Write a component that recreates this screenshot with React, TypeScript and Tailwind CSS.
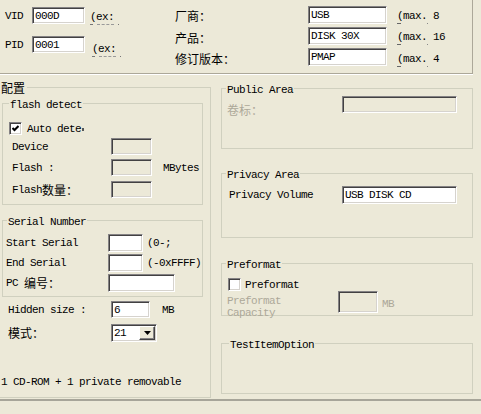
import React from "react";

const mono =
  "font-['Liberation_Mono',monospace] text-[11px] tracking-[-0.6px] leading-[12px] whitespace-nowrap";
const cjk =
  "font-['Noto_Sans_CJK_SC',sans-serif] text-[12px] leading-[12px] whitespace-nowrap";
const sunken =
  "border border-t-[#848284] border-l-[#848284] border-b-white border-r-white shadow-[inset_1px_1px_0_#424142,inset_-1px_-1px_0_#d6d3ce]";
const gray = "text-[#aca899]";

function Edit({
  className = "",
  value = "",
  disabled = false,
}: {
  className?: string;
  value?: string;
  disabled?: boolean;
}) {
  return (
    <div
      className={`${sunken} ${disabled ? "bg-[#ece9d8]" : "bg-white"} ${className} shrink-0 flex items-center pl-[2px] overflow-hidden`}
    >
      <span className={mono}>{value}</span>
    </div>
  );
}

function Check({ checked = false }: { checked?: boolean }) {
  return (
    <div
      className={`${sunken} bg-white w-[13px] h-[13px] shrink-0 flex items-center justify-center`}
    >
      {checked && (
        <svg width="7" height="7" viewBox="0 0 7 7">
          <path d="M0.5 3 L2.5 5 L6.5 1" stroke="black" strokeWidth="2" fill="none" />
        </svg>
      )}
    </div>
  );
}

function Group({
  title,
  className,
  legendClass,
  children,
}: {
  title: React.ReactNode;
  className: string;
  legendClass: string;
  children?: React.ReactNode;
}) {
  return (
    <fieldset className={`border border-[#d0d0bf] shrink-0 ${className}`}>
      <legend className={`${legendClass} px-[1px]`}>{title}</legend>
      {children}
    </fieldset>
  );
}

function Ex({ className }: { className: string }) {
  return (
    <div className={`flex flex-col ${className}`}>
      <span className={mono}>(ex:</span>
      <div className="flex items-center gap-[4px] mt-[1px]">
        <div className="w-[3px] h-[1px] bg-[#777]" />
        <div className="w-[17px] border-t border-dashed border-[#999]" />
        <div className="w-[1px] h-[1px] bg-[#777]" />
      </div>
    </div>
  );
}

function Max({ n, className }: { n: string; className: string }) {
  return (
    <div className={`flex flex-col ${className}`}>
      <span className={mono}>(max. {n}</span>
      <div className="flex items-center mt-[1px]">
        <div className="w-[4px] h-[1px] bg-[#666]" />
        <div className="w-[1px] h-[1px] bg-[#888] ml-[26px]" />
      </div>
    </div>
  );
}

export default function App() {
  return (
    <div className="w-[481px] h-[414px] bg-[#ece9d8] overflow-hidden text-black">
      {/* top section */}
      <div className="h-[74px] w-[473px] border-b border-r border-[#aca899] shadow-[0_1px_0_#fff] flex">
        <div className="w-[175px] shrink-0">
          <div className="flex items-start mt-[7px] h-[17px]">
            <span className={`${mono} ml-[5px] w-[27px] mt-[3px]`}>VID</span>
            <Edit className="w-[53px] h-[17px]" value="000D" />
            <Ex className="ml-[5px] mt-[4px]" />
          </div>
          <div className="flex items-start mt-[12px] h-[17px]">
            <span className={`${mono} ml-[5px] w-[27px] mt-[3px]`}>PID</span>
            <Edit className="w-[53px] h-[17px]" value="0001" />
            <Ex className="ml-[7px] mt-[7px]" />
          </div>
        </div>
        <div className="pt-[6px] flex flex-col gap-[3px]">
          <div className="flex items-start h-[18px]">
            <span className={`${cjk} w-[133px] mt-[4px]`}>厂商：</span>
            <Edit className="w-[79px] h-[18px]" value="USB" />
            <Max n="8" className="ml-[10px] mt-[4px]" />
          </div>
          <div className="flex items-start h-[18px]">
            <span className={`${cjk} w-[133px] mt-[5px]`}>产品：</span>
            <Edit className="w-[79px] h-[18px]" value="DISK 30X" />
            <Max n="16" className="ml-[10px] mt-[4px]" />
          </div>
          <div className="flex items-start h-[18px]">
            <span className={`${cjk} w-[133px] mt-[5px]`}>修订版本：</span>
            <Edit className="w-[79px] h-[18px]" value="PMAP" />
            <Max n="4" className="ml-[10px] mt-[5px]" />
          </div>
        </div>
      </div>

      {/* main area */}
      <div className="flex items-start h-[325px]">
        <Group
          title={<span className={cjk}>配置</span>}
          className="ml-[-8px] mt-[7px] w-[219px] h-[317px]"
          legendClass="ml-[7px] pr-[2px] leading-[12px]"
        >
          <Group
            title={<span className={mono}>flash detect</span>}
            className="ml-[9px] mt-[2px] w-[201px] h-[109px]"
            legendClass="ml-[6px] leading-[12px]"
          >
            <div className="flex items-center mt-[11px] ml-[6px] h-[13px] gap-[5px]">
              <Check checked />
              <span className={mono}>Auto dete</span>
              <div className="w-[2px] h-[3px] bg-[#555] -ml-[4px] mt-[1px]" />
            </div>
            <div className="flex items-center h-[17px] mt-[3px] ml-[9px]">
              <span className={`${mono} w-[99px]`}>Device</span>
              <Edit disabled className="w-[41px] h-[17px]" />
            </div>
            <div className="flex items-center h-[17px] mt-[4px] ml-[9px]">
              <span className={`${mono} w-[99px]`}>Flash :</span>
              <Edit disabled className="w-[41px] h-[17px]" />
              <span className={`${mono} ml-[11px]`}>MBytes</span>
            </div>
            <div className="flex items-center h-[17px] mt-[5px] ml-[9px]">
              <span className="w-[99px] flex items-center">
                <span className={mono}>Flash</span>
                <span className={cjk}>数量：</span>
              </span>
              <Edit disabled className="w-[41px] h-[17px]" />
            </div>
          </Group>

          <Group
            title={<span className={mono}>Serial Number</span>}
            className="ml-[9px] mt-[8px] w-[201px] h-[84px]"
            legendClass="ml-[4px] leading-[12px]"
          >
            <div className="flex items-center h-[18px] mt-[6px] ml-[3px]">
              <span className={`${mono} w-[102px]`}>Start Serial</span>
              <Edit className="w-[35px] h-[18px]" />
              <span className={`${mono} ml-[4px]`}>(0-;</span>
            </div>
            <div className="flex items-center h-[18px] mt-[2px] ml-[3px]">
              <span className={`${mono} w-[102px]`}>End Serial</span>
              <Edit className="w-[35px] h-[18px]" />
              <span className={`${mono} ml-[4px]`}>(-0xFFFF)</span>
            </div>
            <div className="flex items-center h-[18px] mt-[2px] ml-[3px]">
              <span className="w-[102px] flex items-center">
                <span className={mono}>PC</span>
                <span className={`${cjk} ml-[6px]`}>编号：</span>
              </span>
              <Edit className="w-[67px] h-[18px]" />
            </div>
          </Group>

          <div className="flex items-center h-[17px] mt-[4px] ml-[15px]">
            <span className={`${mono} w-[103px]`}>Hidden size :</span>
            <Edit className="w-[39px] h-[17px]" value="6" />
            <span className={`${mono} ml-[12px]`}>MB</span>
          </div>
          <div className="flex items-center h-[18px] mt-[6px] ml-[15px]">
            <span className={`${cjk} w-[103px]`}>模式：</span>
            <div className={`${sunken} bg-white w-[46px] h-[18px] flex p-[1px]`}>
              <span className={`${mono} pl-[1px] flex-1 self-center`}>21</span>
              <div className="w-[16px] h-full bg-[#ece9d8] border border-t-white border-l-white border-b-[#424142] border-r-[#424142] shadow-[inset_-1px_-1px_0_#848284] flex items-center justify-center">
                <svg width="7" height="4" viewBox="0 0 7 4">
                  <path d="M0 0H7L3.5 4Z" fill="black" />
                </svg>
              </div>
            </div>
          </div>
          <div className={`${mono} mt-[34px] ml-[8px]`}>1 CD-ROM + 1 private removable</div>
        </Group>

        <div className="ml-[10px] mt-[7px] flex flex-col">
          <Group
            title={<span className={mono}>Public Area</span>}
            className="w-[252px] h-[68px]"
            legendClass="ml-[4px] leading-[12px]"
          >
            <div className="flex items-start">
              <span className={`${cjk} ${gray} ml-[5px] w-[115px] mt-[8px]`}>卷标：</span>
              <Edit disabled className="w-[115px] h-[17px]" />
            </div>
          </Group>

          <Group
            title={<span className={mono}>Privacy Area</span>}
            className="w-[252px] h-[72px] mt-[17px]"
            legendClass="ml-[4px] leading-[12px]"
          >
            <div className="flex items-start">
              <span className={`${mono} ml-[7px] w-[113px] mt-[8px]`}>Privacy Volume</span>
              <Edit className="w-[115px] h-[18px] mt-[5px]" value="USB DISK CD" />
            </div>
          </Group>

          <Group
            title={<span className={mono}>Preformat</span>}
            className="w-[252px] h-[60px] mt-[18px]"
            legendClass="ml-[4px] leading-[12px]"
          >
            <div className="flex items-center mt-[7px] ml-[6px] h-[13px] gap-[4px]">
              <Check />
              <span className={mono}>Preformat</span>
            </div>
            <div className="flex items-start">
              <div className="ml-[5px] w-[111px] mt-[4px] flex flex-col">
                <span className={`${mono} ${gray} leading-[11px]`}>Preformat</span>
                <span className={`${mono} ${gray} leading-[11px]`}>Capacity</span>
              </div>
              <Edit disabled className="w-[40px] h-[22px]" />
              <span className={`${mono} ${gray} ml-[4px] mt-[7px]`}>MB</span>
            </div>
          </Group>

          <Group
            title={<span className={mono}>TestItemOption</span>}
            className="w-[252px] h-[58px] mt-[20px]"
            legendClass="ml-[7px] leading-[12px]"
          />
        </div>
      </div>

      <div className="h-[15px] border-t-2 border-t-[#a7a599]" />
    </div>
  );
}
